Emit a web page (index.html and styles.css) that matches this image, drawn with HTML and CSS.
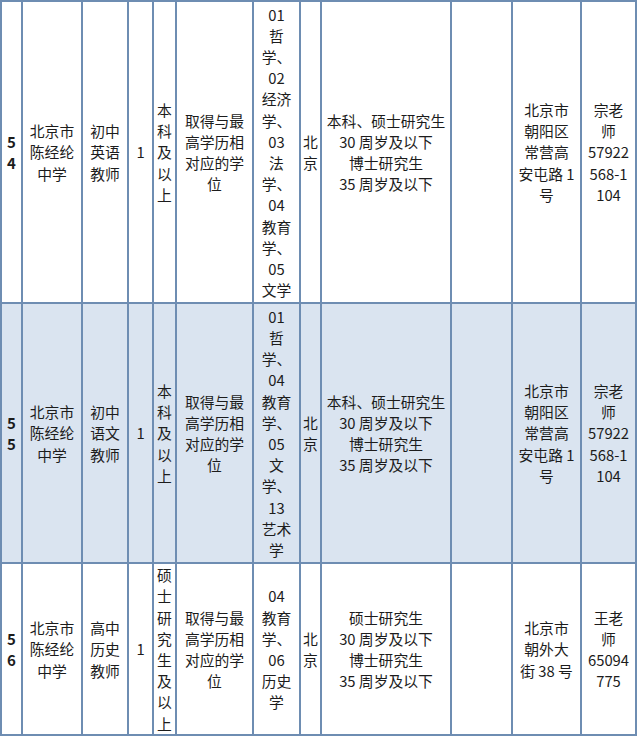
FILE: index.html
```html
<!DOCTYPE html>
<html lang="zh-CN">
<head>
<meta charset="utf-8">
<title>招聘岗位表</title>
<link rel="stylesheet" href="styles.css">
</head>
<body>
<table class="jobs">
  <colgroup>
    <col class="c-no">
    <col class="c-school">
    <col class="c-post">
    <col class="c-num">
    <col class="c-edu">
    <col class="c-degree">
    <col class="c-major">
    <col class="c-place">
    <col class="c-age">
    <col class="c-other">
    <col class="c-addr">
    <col class="c-contact">
  </colgroup>
  <tbody>
    <tr class="r1">
      <td class="no">5<br>4</td>
      <td>北京市<br>陈经纶<br>中学</td>
      <td>初中<br>英语<br>教师</td>
      <td>1</td>
      <td>本<br>科<br>及<br>以<br>上</td>
      <td>取得与最<br>高学历相<br>对应的学<br>位</td>
      <td>01<br>哲<br>学、<br>02<br>经济<br>学、<br>03<br>法<br>学、<br>04<br>教育<br>学、<br>05<br>文学</td>
      <td class="place">北<br>京</td>
      <td>本科、硕士研究生<br>30 周岁及以下<br>博士研究生<br>35 周岁及以下</td>
      <td></td>
      <td>北京市<br>朝阳区<br>常营高<br>安屯路 1<br>号</td>
      <td>宗老<br>师<br>57922<br>568-1<br>104</td>
    </tr>
    <tr class="r2 shade">
      <td class="no">5<br>5</td>
      <td>北京市<br>陈经纶<br>中学</td>
      <td>初中<br>语文<br>教师</td>
      <td>1</td>
      <td>本<br>科<br>及<br>以<br>上</td>
      <td>取得与最<br>高学历相<br>对应的学<br>位</td>
      <td>01<br>哲<br>学、<br>04<br>教育<br>学、<br>05<br>文<br>学、<br>13<br>艺术<br>学</td>
      <td class="place">北<br>京</td>
      <td>本科、硕士研究生<br>30 周岁及以下<br>博士研究生<br>35 周岁及以下</td>
      <td></td>
      <td>北京市<br>朝阳区<br>常营高<br>安屯路 1<br>号</td>
      <td>宗老<br>师<br>57922<br>568-1<br>104</td>
    </tr>
    <tr class="r3">
      <td class="no">5<br>6</td>
      <td>北京市<br>陈经纶<br>中学</td>
      <td>高中<br>历史<br>教师</td>
      <td>1</td>
      <td>硕<br>士<br>研<br>究<br>生<br>及<br>以<br>上</td>
      <td>取得与最<br>高学历相<br>对应的学<br>位</td>
      <td>04<br>教育<br>学、<br>06<br>历史<br>学</td>
      <td class="place">北<br>京</td>
      <td>硕士研究生<br>30 周岁及以下<br>博士研究生<br>35 周岁及以下</td>
      <td></td>
      <td>北京市<br>朝外大<br>街 38 号</td>
      <td>王老<br>师<br>65094<br>775</td>
    </tr>
  </tbody>
</table>
</body>
</html>
```

FILE: styles.css
```css
html, body {
  margin: 0;
  padding: 0;
  background: #ffffff;
}

body {
  font-family: "Noto Sans CJK SC", "Noto Sans", sans-serif;
  font-size: 14.8px;
  line-height: 21.2px;
  color: #1c1c1c;
}

.jobs {
  border-collapse: collapse;
  table-layout: fixed;
  width: 637px;
  margin-left: 0;
}

.jobs td {
  border: 2px solid #6e8db2;
  padding: 0;
  text-align: center;
  vertical-align: middle;
  overflow: hidden;
  white-space: nowrap;
}

.c-no { width: 21px; }
.c-school { width: 60px; }
.c-post { width: 46px; }
.c-num { width: 25px; }
.c-edu { width: 23px; }
.c-degree { width: 77px; }
.c-major { width: 47px; }
.c-place { width: 21px; }
.c-age { width: 130px; }
.c-other { width: 61px; }
.c-addr { width: 69px; }
.c-contact { width: 55px; }

.r1 { height: 302px; }
.r2 { height: 260px; }
.r3 { height: 172px; }

.shade td {
  background: #dae4f0;
}

.no {
  font-weight: 700;
  font-size: 15px;
}

.place {
  text-align: right;
}
```
